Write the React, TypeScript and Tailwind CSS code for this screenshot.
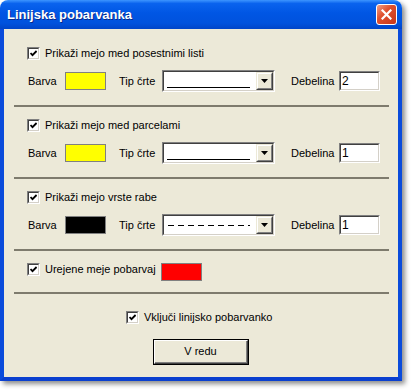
import React from 'react'

const Check: React.FC = () => (
  <span className="flex h-[13px] w-[13px] shrink-0 border border-t-[#808080] border-l-[#808080] border-b-white border-r-white">
    <span className="flex flex-1 items-center justify-center border border-t-[#404040] border-l-[#404040] border-b-[#d4d0c8] border-r-[#d4d0c8] bg-white">
      <svg width="7" height="7" viewBox="0 0 7 7">
        <polyline points="0.5,3 2.5,5.2 6.6,1" fill="none" stroke="black" strokeWidth="1.8" />
      </svg>
    </span>
  </span>
)

const Sunken: React.FC<{ className: string; children?: React.ReactNode }> = ({ className, children }) => (
  <div className={`flex border border-t-[#808080] border-l-[#808080] border-b-white border-r-white ${className}`}>
    <div className="flex flex-1 border border-t-[#404040] border-l-[#404040] border-b-[#d4d0c8] border-r-[#d4d0c8] bg-white">
      {children}
    </div>
  </div>
)

const Combo: React.FC<{ dashed?: boolean }> = ({ dashed }) => (
  <Sunken className="h-[22px] w-[113px]">
    <div className="flex flex-1 px-[2px]">
      {dashed ? (
        <div className="ml-[2px] mr-[4px] h-px flex-1 self-center bg-[repeating-linear-gradient(90deg,#000_0_6px,transparent_6px_10px)]" />
      ) : (
        <div className="mb-[2px] ml-[1px] mr-[4px] h-px flex-1 self-end bg-black" />
      )}
    </div>
    <div className="flex w-[17px] border border-t-[#ece9d8] border-l-[#ece9d8] border-b-[#404040] border-r-[#404040]">
      <div className="flex flex-1 items-center justify-center border border-t-white border-l-white border-b-[#808080] border-r-[#808080] bg-[#ece9d8]">
        <svg width="7" height="4" viewBox="0 0 7 4">
          <polygon points="0,0 7,0 3.5,4" fill="black" />
        </svg>
      </div>
    </div>
  </Sunken>
)

const Separator: React.FC<{ className: string }> = ({ className }) => (
  <div className={`ml-[10px] mr-[9px] h-[2px] bg-[#7e7b6d] ${className}`} />
)

interface SectionProps {
  label: string
  swatch: string
  width: string
  dashed?: boolean
  first?: boolean
}

const Section: React.FC<SectionProps> = ({ label, swatch, width, dashed, first }) => (
  <>
    <div className={`flex h-[13px] items-center gap-[5px] pl-[23px] ${first ? '' : 'mt-[12px]'}`}>
      <Check />
      <span>{label}</span>
    </div>
    <div className="mt-[10px] flex h-[22px] items-center pl-[24px]">
      <span className="w-[37px]">Barva</span>
      <div className={`h-[18px] w-[41px] border border-[#808080] ${swatch}`} />
      <span className="ml-[13px] w-[43px]">Tip črte</span>
      <Combo dashed={dashed} />
      <span className="ml-[16px] w-[48px]">Debelina</span>
      <Sunken className="h-[20px] w-[41px]">
        <span className="pl-[1px] text-[12px] leading-[16px]">{width}</span>
      </Sunken>
    </div>
    <Separator className="mt-[13px]" />
  </>
)

export default function App() {
  return (
    <div className="h-[392px] w-[414px] bg-white font-['Liberation_Sans',Arial,sans-serif] text-[11px] text-black">
      <div className="flex h-[381px] w-[402px] flex-col overflow-hidden rounded-t-[8px] shadow-[3px_3px_5px_rgba(0,0,0,0.45)]">
        <div className="flex h-[29px] shrink-0 items-center justify-between bg-[linear-gradient(180deg,#3d95ff_0%,#0a63ee_12%,#0056e4_45%,#0052dd_80%,#0045c8_100%)] pl-[7px] pr-[5px]">
          <span className="text-[13px] font-bold text-white [text-shadow:1px_1px_0_#0b2a8a]">Linijska pobarvanka</span>
          <div className="flex h-[21px] w-[21px] items-center justify-center rounded-[3px] border border-white bg-[linear-gradient(135deg,#f0a088_0%,#e0512f_40%,#c8361a_100%)]">
            <svg width="11" height="11" viewBox="0 0 11 11">
              <path d="M1.5 1.5 L9.5 9.5 M9.5 1.5 L1.5 9.5" stroke="white" strokeWidth="2.2" strokeLinecap="square" />
            </svg>
          </div>
        </div>
        <div className="flex flex-1 flex-col border-x-4 border-b-4 border-x-[#0a4bdb] border-b-[#0a3fcf] bg-[#ece9d8] pt-[18px]">
          <Section first label="Prikaži mejo med posestnimi listi" swatch="bg-[#ffff00]" width="2" />
          <Section label="Prikaži mejo med parcelami" swatch="bg-[#ffff00]" width="1" />
          <Section label="Prikaži mejo vrste rabe" swatch="bg-black" width="1" dashed />
          <div className="mt-[12px] flex h-[18px] items-start pl-[23px]">
            <div className="flex h-[13px] items-center gap-[5px]">
              <Check />
              <span className="w-[116px]">Urejene meje pobarvaj</span>
            </div>
            <div className="h-[18px] w-[41px] border border-[#808080] bg-[#ff0000]" />
          </div>
          <Separator className="mt-[11px]" />
          <div className="mt-[17px] flex h-[13px] items-center gap-[5px] pl-[122px]">
            <Check />
            <span>Vključi linijsko pobarvanko</span>
          </div>
          <div className="mt-[15px] flex h-[26px] w-[96px] self-center border border-black">
            <div className="flex flex-1 border border-t-white border-l-white border-b-[#404040] border-r-[#404040]">
              <div className="flex flex-1 items-center justify-center border-b border-r border-b-[#808080] border-r-[#808080] bg-[#ece9d8]">
                V redu
              </div>
            </div>
          </div>
        </div>
      </div>
    </div>
  )
}
